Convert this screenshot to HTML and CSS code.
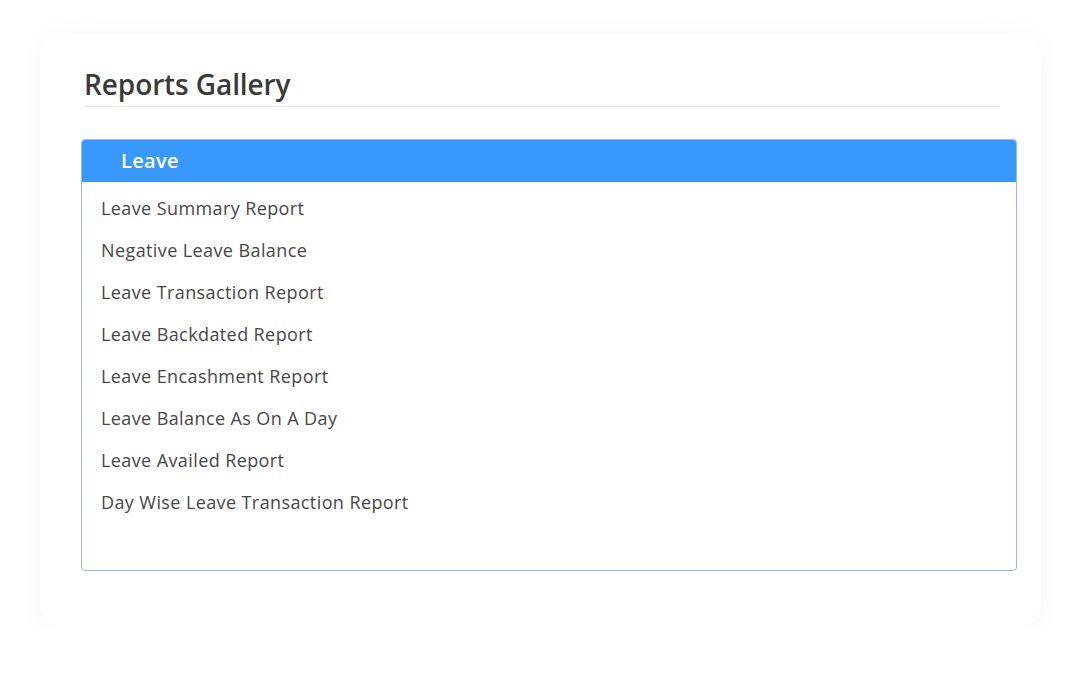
FILE: index.html
```html
<!DOCTYPE html>
<html lang="en">
  <head>
    <meta charset="UTF-8" />
    <meta name="viewport" content="width=device-width, initial-scale=1.0" />
    <title>Reports Gallery</title>
    <link rel="stylesheet" href="styles.css">
  </head>
  <body>
    <div class="card">
      <h2 class="title">Reports Gallery</h2>
      <div class="panel">
        <div class="panel-header">Leave</div>
        <ul class="report-list">
          <li>Leave Summary Report</li>
          <li>Negative Leave Balance</li>
          <li>Leave Transaction Report</li>
          <li>Leave Backdated Report</li>
          <li>Leave Encashment Report</li>
          <li>Leave Balance As On A Day</li>
          <li>Leave Availed Report</li>
          <li>Day Wise Leave Transaction Report</li>
        </ul>
      </div>
    </div>
  </body>
</html>
```

FILE: styles.css
```css
body {
  margin: 0;
  font-family: "Open Sans", "Noto Sans", sans-serif;
  background: #ffffff;
  padding: 33px 0 0 40px;
}
.card {
  box-sizing: border-box;
  width: 1001px;
  height: 594px;
  background: white;
  border-radius: 22px;
  box-shadow: 0 4px 30px rgba(0, 0, 0, 0.045);
  padding: 32px 24px 0 41px;
}
.title {
  margin: 0 17px 0 3px;
  padding-bottom: 3px;
  font-size: 28px;
  font-weight: 600;
  letter-spacing: -0.1px;
  color: #3a3a3a;
  border-bottom: 1px solid #e6e6e6;
}
.panel {
  margin-top: 32px;
  height: 432px;
  box-sizing: border-box;
  border: 1px solid #8cc0f7;
  border-radius: 4px;
  overflow: hidden;
}
.panel-header {
  background: #3898fc;
  color: white;
  font-size: 20px;
  font-weight: 600;
  letter-spacing: 0.3px;
  height: 43px;
  line-height: 43px;
  padding-left: 40px;
  margin: -1px -1px 0 -1px;
}
.report-list {
  list-style: none;
  margin: 0;
  padding: 5px 0 0 19px;
}
.report-list li {
  height: 42px;
  line-height: 42px;
  font-size: 18px;
  letter-spacing: 0.4px;
  color: #474747;
}
```
